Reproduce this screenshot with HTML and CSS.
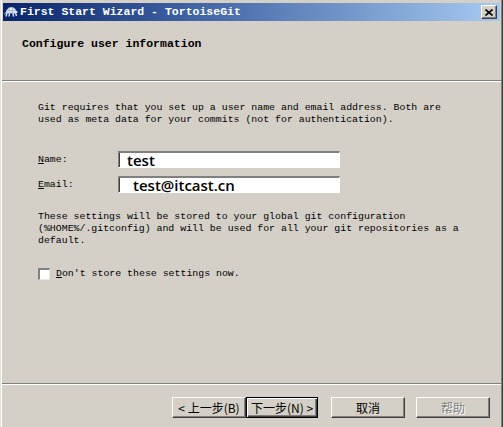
FILE: index.html
```html
<!DOCTYPE html>
<html>
<head>
<meta charset="utf-8">
<link rel="stylesheet" href="styles.css">
</head>
<body>
<div class="window">
  <div class="titlebar">
    <svg class="app-icon" width="14" height="12" viewBox="0 0 14 12">
      <path d="M2 7 Q3 1 8 1.5 Q12 2 12.5 7 Z" fill="#e8eef8" stroke="#b8c4dc" stroke-width="0.8"/>
      <path d="M5 2.5 L6 7 M8.5 2 L8.5 7 M3.5 4.5 L11.5 4.5" stroke="#9aa8c4" stroke-width="0.8" fill="none"/>
      <path d="M12 5 Q14 4.5 13.6 6.5 L12.4 7" fill="#dfe6f2"/>
      <path d="M3 7 L2 10.5 M5.5 7 L5 10.5 M9 7 L9.5 10.5 M11.5 7 L12.5 10" stroke="#dfe6f2" stroke-width="1.4"/>
      <path d="M2.2 6.5 L0.5 8" stroke="#dfe6f2" stroke-width="1"/>
    </svg>
    <span class="title">First Start Wizard - TortoiseGit</span>
    <span class="close">
      <svg width="8" height="7" viewBox="0 0 8 7"><path d="M0.5 0.5 L7.5 6.5 M7.5 0.5 L0.5 6.5" stroke="#000" stroke-width="1.6"/></svg>
    </span>
  </div>
  <div class="header"><span class="heading">Configure user information</span></div>
  <div class="sep"></div>
  <div class="content">
    <p class="text intro">Git requires that you set up a user name and email address. Both are<br>used as meta data for your commits (not for authentication).</p>
    <div class="fields">
      <div class="field">
        <span class="text label"><u>N</u>ame:</span>
        <div class="input"><span class="value v-name">test</span></div>
      </div>
      <div class="field">
        <span class="text label"><u>E</u>mail:</span>
        <div class="input"><span class="value v-email">test@itcast.cn</span></div>
      </div>
    </div>
    <p class="text note">These settings will be stored to your global git configuration<br>(%HOME%/.gitconfig) and will be used for all your git repositories as a<br>default.</p>
    <div class="check-row">
      <span class="checkbox"></span>
      <span class="text"><u>D</u>on't store these settings now.</span>
    </div>
  </div>
  <div class="footer">
    <div class="sep"></div>
    <div class="buttons">
      <span class="btn b-back">&lt; 上一步(B)</span>
      <span class="btn b-next">下一步(N) &gt;</span>
      <span class="btn b-cancel">取消</span>
      <span class="btn b-help disabled">帮助</span>
    </div>
  </div>
</div>
</body>
</html>
```
FILE: styles.css
```css
html, body {
  margin: 0;
  padding: 0;
  background: #d4d0c8;
}
.window {
  width: 503px;
  height: 427px;
  box-sizing: border-box;
  background: #d4d0c8;
  display: flex;
  flex-direction: column;
  padding: 0 3px 0 3px;
  box-shadow: inset 1px 0 #e4e2dc, inset 2px 0 #ffffff, inset -1px 0 #404040, inset -2px 0 #808080;
}
.titlebar {
  margin-top: 3px;
  height: 18px;
  display: flex;
  align-items: center;
  background: linear-gradient(to right, #0a246a, #3a5ea0 35%, #a6caf0);
  padding: 0 3px 0 1px;
}
.app-icon {
  flex: none;
  margin-right: 2px;
}
.title {
  font-family: "Liberation Mono", "DejaVu Sans Mono", monospace;
  font-weight: bold;
  font-size: 11.5px;
  color: #ffffff;
  line-height: 18px;
  white-space: pre;
}
.close {
  margin-left: auto;
  width: 16px;
  height: 14px;
  box-sizing: border-box;
  background: #d4d0c8;
  border: 1px solid;
  border-color: #ffffff #404040 #404040 #ffffff;
  box-shadow: inset -1px -1px #808080;
  display: flex;
  align-items: center;
  justify-content: center;
}
.header {
  height: 59px;
  box-sizing: border-box;
  padding: 12px 0 0 19px;
}
.heading {
  font-family: "Liberation Mono", "DejaVu Sans Mono", monospace;
  font-weight: bold;
  font-size: 11.5px;
  line-height: 12px;
  color: #000;
  white-space: pre;
}
.sep {
  height: 1px;
  border-top: 1px solid #808080;
  background: #ffffff;
  margin: 0 -1px;
}
.content {
  padding: 20px 0 0 35px;
  display: flex;
  flex-direction: column;
}
.text {
  font-family: "Liberation Mono", "DejaVu Sans Mono", monospace;
  font-size: 9.9px;
  line-height: 12px;
  color: #000;
  white-space: pre;
}
p {
  margin: 0;
}
.fields {
  margin-top: 25px;
  display: flex;
  flex-direction: column;
  gap: 8px;
}
.field {
  display: flex;
  align-items: center;
  height: 17px;
}
.label {
  width: 80px;
}
.input {
  width: 222px;
  height: 17px;
  box-sizing: border-box;
  background: #ffffff;
  border: 1px solid;
  border-width: 2px 1px 1px 1px;
  border-color: #808080 #ffffff #ffffff #808080;
  box-shadow: inset 1px 0 #404040;
}
.value {
  display: block;
  font-family: "Open Sans", "Liberation Sans", sans-serif;
  font-weight: 600;
  font-size: 15px;
  line-height: 14px;
  color: #000;
}
.v-name {
  padding-left: 8px;
}
.v-email {
  padding-left: 14px;
}
.note {
  margin-top: 18px;
}
.check-row {
  margin-top: 20px;
  display: flex;
  align-items: center;
  gap: 6px;
  height: 13px;
}
.checkbox {
  width: 12px;
  height: 12px;
  box-sizing: border-box;
  background: #ffffff;
  border: 1px solid;
  border-width: 2px 1px 1px 2px;
  border-color: #808080 #e8e6e0 #e8e6e0 #808080;
}
.footer {
  margin-top: auto;
}
.buttons {
  display: flex;
  justify-content: flex-end;
  padding: 12px 10px 9px 0;
}
.btn {
  height: 21px;
  box-sizing: border-box;
  display: flex;
  align-items: center;
  justify-content: center;
  font-family: "Noto Sans CJK SC", "Liberation Sans", sans-serif;
  font-size: 12px;
  color: #000;
  white-space: pre;
  border: 1px solid;
  border-color: #ffffff #404040 #404040 #ffffff;
  box-shadow: inset -1px -1px #808080;
  background: #d4d0c8;
}
.b-back {
  width: 74px;
}
.b-next {
  width: 72px;
  margin-right: 13px;
  border-color: #000;
  box-shadow: inset 1px 1px #ffffff, inset -1px -1px #404040, inset -2px -2px #808080;
}
.b-cancel {
  width: 74px;
  margin-right: 11px;
}
.b-help {
  width: 74px;
}
.disabled {
  color: #808080;
  text-shadow: 1px 1px #ffffff;
}
```
